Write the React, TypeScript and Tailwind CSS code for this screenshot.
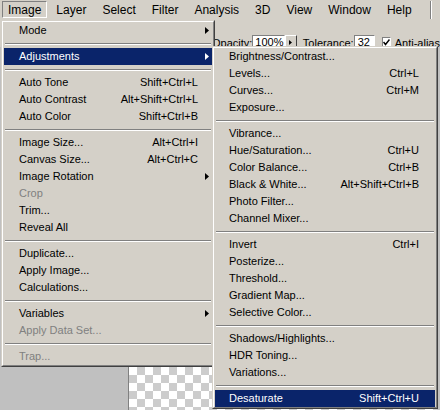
import React from "react";

type Item =
  | { sep: true }
  | {
      sep?: false;
      label: string;
      shortcut?: string;
      sub?: boolean;
      disabled?: boolean;
      active?: boolean;
    };

const imageMenu: Item[] = [
  { label: "Mode", sub: true },
  { sep: true },
  { label: "Adjustments", sub: true, active: true },
  { sep: true },
  { label: "Auto Tone", shortcut: "Shift+Ctrl+L" },
  { label: "Auto Contrast", shortcut: "Alt+Shift+Ctrl+L" },
  { label: "Auto Color", shortcut: "Shift+Ctrl+B" },
  { sep: true },
  { label: "Image Size...", shortcut: "Alt+Ctrl+I" },
  { label: "Canvas Size...", shortcut: "Alt+Ctrl+C" },
  { label: "Image Rotation", sub: true },
  { label: "Crop", disabled: true },
  { label: "Trim..." },
  { label: "Reveal All" },
  { sep: true },
  { label: "Duplicate..." },
  { label: "Apply Image..." },
  { label: "Calculations..." },
  { sep: true },
  { label: "Variables", sub: true },
  { label: "Apply Data Set...", disabled: true },
  { sep: true },
  { label: "Trap...", disabled: true },
];

const adjMenu: Item[] = [
  { label: "Brightness/Contrast..." },
  { label: "Levels...", shortcut: "Ctrl+L" },
  { label: "Curves...", shortcut: "Ctrl+M" },
  { label: "Exposure..." },
  { sep: true },
  { label: "Vibrance..." },
  { label: "Hue/Saturation...", shortcut: "Ctrl+U" },
  { label: "Color Balance...", shortcut: "Ctrl+B" },
  { label: "Black & White...", shortcut: "Alt+Shift+Ctrl+B" },
  { label: "Photo Filter..." },
  { label: "Channel Mixer..." },
  { sep: true },
  { label: "Invert", shortcut: "Ctrl+I" },
  { label: "Posterize..." },
  { label: "Threshold..." },
  { label: "Gradient Map..." },
  { label: "Selective Color..." },
  { sep: true },
  { label: "Shadows/Highlights..." },
  { label: "HDR Toning..." },
  { label: "Variations..." },
  { sep: true },
  { label: "Desaturate", shortcut: "Shift+Ctrl+U", active: true },
];

function Arrow({ white }: { white?: boolean }) {
  return (
    <svg
      width="4"
      height="7"
      viewBox="0 0 4 7"
      className="absolute right-[3px] top-[5px]"
    >
      <path d="M0 0 L4 3.5 L0 7 Z" fill={white ? "#ffffff" : "#000000"} />
    </svg>
  );
}

function Menu({
  items,
  className,
  pl,
  pr,
}: {
  items: Item[];
  className: string;
  pl: string;
  pr: string;
}) {
  return (
    <div
      className={
        "absolute border border-t-[#d4d0c8] border-l-[#d4d0c8] border-r-[#404040] border-b-[#404040] bg-[#d4d0c8] " +
        className
      }
    >
      <div className="border border-t-white border-l-white border-r-[#808080] border-b-[#808080] flex flex-col">
        {items.map((it, i) =>
          it.sep ? (
            <div key={i} className="h-[9px] pt-[4px] mx-[2px]">
              <div className="h-[2px] border-t border-t-[#808080] border-b border-b-white" />
            </div>
          ) : (
            <div
              key={i}
              className={
                "relative h-[17px] mx-[1px] flex items-center leading-[17px] " +
                pl +
                " " +
                pr +
                " " +
                (it.active
                  ? "bg-[#0a246a] text-white"
                  : it.disabled
                  ? "text-[#808080]"
                  : "text-black")
              }
            >
              <span className="flex-1 whitespace-nowrap">{it.label}</span>
              {it.shortcut && (
                <span className="whitespace-nowrap">{it.shortcut}</span>
              )}
              {it.sub && <Arrow white={it.active} />}
            </div>
          )
        )}
      </div>
    </div>
  );
}

export default function App() {
  const menus = [
    "Layer",
    "Select",
    "Filter",
    "Analysis",
    "3D",
    "View",
    "Window",
    "Help",
  ];
  return (
    <div
      className="relative w-[440px] h-[410px] overflow-hidden bg-[#d4d0c8] flex flex-col text-[11px]"
      style={{ fontFamily: '"Liberation Sans", Arial, sans-serif' }}
    >
      {/* Menu bar */}
      <div className="h-[20px] flex items-start pl-[2px] pt-[1px] text-[12px] text-black shrink-0">
        <div className="h-[17px] px-[5px] flex items-center border border-t-[#808080] border-l-[#808080] border-r-white border-b-white">
          Image
        </div>
        {menus.map((m) => (
          <div key={m} className="h-[17px] px-[7px] ml-[2px] flex items-center">
            {m}
          </div>
        ))}
        <div className="flex-1" />
        <div className="h-[18px] w-[2px] border-l border-l-[#808080] border-r border-r-white mr-[8px]" />
      </div>

      {/* Options bar */}
      <div className="h-[27px] shrink-0 flex items-start pt-[15px] pl-[212px] text-black whitespace-nowrap">
        <span className="w-[45px] leading-[14px] mt-[1px]">Opacity:</span>
        <div className="h-[14px] w-[38px] bg-white border border-t-[#808080] border-l-[#808080] border-r-white border-b-white pl-[2px] leading-[12px]">
          100%
        </div>
        <div className="h-[14px] w-[15px] border border-t-white border-l-white border-r-[#404040] border-b-[#404040] bg-[#d4d0c8] flex items-center justify-center">
          <svg width="3" height="5" viewBox="0 0 3 5">
            <path d="M0 0 L3 2.5 L0 5 Z" fill="#000" />
          </svg>
        </div>
        <span className="ml-[6px] w-[51px] leading-[14px] mt-[1px]">Tolerance:</span>
        <div className="h-[14px] w-[25px] bg-white border border-t-[#808080] border-l-[#808080] border-r-white border-b-white pl-[3px] leading-[12px]">
          32
        </div>
        <div className="ml-[7px] mt-[2px] h-[11px] w-[11px] bg-white border border-t-[#808080] border-l-[#808080] border-r-white border-b-white flex items-center justify-center">
          <svg width="7" height="7" viewBox="0 0 7 7">
            <path d="M0.5 3 L2.5 5.5 L6.5 0.5" stroke="#000" strokeWidth="1.5" fill="none" />
          </svg>
        </div>
        <span className="ml-[4px] leading-[14px] mt-[1px]">Anti-alias</span>
      </div>

      {/* Workspace */}
      <div className="flex-1 bg-[#c0c0c0] flex pl-[128px]">
        <div className="flex-1 mr-[3px] border-l border-l-[#808080] bg-[image:conic-gradient(#cccccc_25%,#ffffff_0_50%,#cccccc_0_75%,#ffffff_0)] bg-[length:16px_16px]" />
      </div>

      <Menu
        items={imageMenu}
        className="left-[1px] top-[20px] w-[214px]"
        pl="pl-[15px]"
        pr="pr-[14px]"
      />
      <Menu
        items={adjMenu}
        className="left-[212px] top-[46px] w-[226px]"
        pl="pl-[14px]"
        pr="pr-[16px]"
      />
    </div>
  );
}
